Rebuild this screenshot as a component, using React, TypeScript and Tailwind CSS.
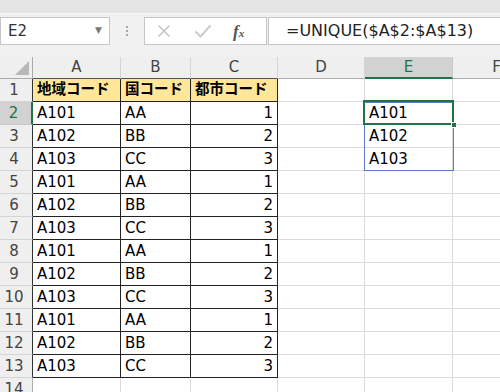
import React from "react"

const font = "font-['DejaVu_Sans','Noto_Sans_CJK_JP',sans-serif]"

const cols = ["A", "B", "C", "D", "E", "F"]

const rows: (string | number)[][] = [
  ["地域コード", "国コード", "都市コード"],
  ["A101", "AA", 1],
  ["A102", "BB", 2],
  ["A103", "CC", 3],
  ["A101", "AA", 1],
  ["A102", "BB", 2],
  ["A103", "CC", 3],
  ["A101", "AA", 1],
  ["A102", "BB", 2],
  ["A103", "CC", 3],
  ["A101", "AA", 1],
  ["A102", "BB", 2],
  ["A103", "CC", 3],
  [],
]

const spill: Record<number, string> = { 2: "A101", 3: "A102", 4: "A103" }

function FormulaBar() {
  return (
    <div className="flex items-center h-[42px] pb-[10px]">
      <div className="w-[110px] h-[28px] bg-white border border-[#c6c6c6] flex items-center justify-between pl-[7px] pr-[7px] text-[15px] text-[#333]">
        <span>E2</span>
        <span className="text-[9px] text-[#777]">▼</span>
      </div>
      <div className="w-[34px] flex flex-col items-center gap-[2px]">
        <span className="w-[2px] h-[2px] bg-[#a8a8a8]" />
        <span className="w-[2px] h-[2px] bg-[#a8a8a8]" />
        <span className="w-[2px] h-[2px] bg-[#a8a8a8]" />
      </div>
      <div className="w-[123px] h-[28px] bg-white border border-[#c6c6c6] flex items-center">
        <svg width="16" height="16" viewBox="0 0 16 16" className="ml-[11px]">
          <path d="M2.5 2.5 L13.5 13.5 M13.5 2.5 L2.5 13.5" stroke="#c4c4c4" strokeWidth="1.6" fill="none" />
        </svg>
        <svg width="18" height="16" viewBox="0 0 18 16" className="ml-[22px]">
          <path d="M1.5 8.5 L6.5 13.5 L16.5 2.5" stroke="#cccccc" strokeWidth="2" fill="none" />
        </svg>
        <span className="ml-[21px] font-['Liberation_Serif',serif] italic font-bold text-[17px] text-[#555] leading-none">
          f<span className="text-[11px]">x</span>
        </span>
      </div>
      <div className="ml-[1px] flex-1 h-[28px] bg-white border border-[#c6c6c6] border-r-0 flex items-center pl-[17px] text-[16px] text-[#222]">
        =UNIQUE($A$2:$A$13)
      </div>
    </div>
  )
}

export default function App() {
  return (
    <div className={`w-[500px] h-[392px] overflow-hidden bg-[#f1f1f1] ${font}`}>
      <div className="h-[14px] bg-[#e4e4e4] border-b border-[#f8f8f8]" />
      <div className="pt-[1px]">
        <FormulaBar />
      </div>
      <div className="relative">
        <div className="grid grid-cols-[33px_88px_70px_87px_87px_88px_88px] grid-rows-[22px] auto-rows-[23px] w-[541px]">
          <div className="relative bg-[#efefef] border-r border-b border-[#ababab]">
            <svg width="14" height="14" viewBox="0 0 14 14" className="absolute right-[3px] bottom-[3px]">
              <path d="M14 0 L14 14 L0 14 Z" fill="#b8b8b8" />
            </svg>
          </div>
          {cols.map((c, i) => {
            const sel = c === "E"
            const dark = i < 3
            return (
              <div
                key={c}
                className={`flex items-center justify-center text-[15px] border-r ${
                  sel
                    ? "bg-[#d2d2d2] text-[#217346] border-b-2 border-b-[#217346] border-r-[#c8c8c8]"
                    : `bg-[#efefef] text-[#444] border-b border-r-[#d4d4d4] ${dark ? "border-b-[#555]" : "border-b-[#ababab]"}`
                }`}
              >
                {c}
              </div>
            )
          })}
          {rows.map((r, ri) => {
            const n = ri + 1
            const inTable = n <= 13
            const selRow = n === 2
            return (
              <React.Fragment key={n}>
                <div
                  className={`flex items-center justify-center pr-[4px] text-[15px] border-b ${
                    selRow
                      ? "bg-[#d2d2d2] text-[#217346] border-r-2 border-r-[#217346] border-b-[#c8c8c8]"
                      : `bg-[#efefef] text-[#444] border-r border-b-[#d4d4d4] ${inTable ? "border-r-[#333]" : "border-r-[#ababab]"}`
                  }`}
                >
                  {n}
                </div>
                {cols.map((c, ci) => {
                  const tbl = inTable && ci < 3
                  const head = n === 1 && ci < 3
                  const v = ci < 3 ? r[ci] : c === "E" ? spill[n] : undefined
                  const num = typeof v === "number"
                  return (
                    <div
                      key={c}
                      className={`flex items-center overflow-hidden whitespace-nowrap border-r border-b ${
                        tbl ? "border-[#222]" : "border-[#dadada]"
                      } ${head ? "bg-[#ffe699] font-bold text-[14.5px] pl-[4px]" : "bg-white text-[15px]"} ${
                        num ? "justify-end pr-[4px]" : "pl-[4px]"
                      } text-black`}
                    >
                      {v}
                    </div>
                  )
                })}
              </React.Fragment>
            )
          })}
        </div>
        <div className="absolute left-[364px] top-[45px] w-[90px] h-[69px] border border-[#5a7dc8]" />
        <div className="absolute left-[363px] top-[43px] w-[91px] h-[25px] border-2 border-[#217346]" />
        <div className="absolute left-[451px] top-[65px] w-[6px] h-[6px] bg-[#217346] border border-white" />
      </div>
    </div>
  )
}
